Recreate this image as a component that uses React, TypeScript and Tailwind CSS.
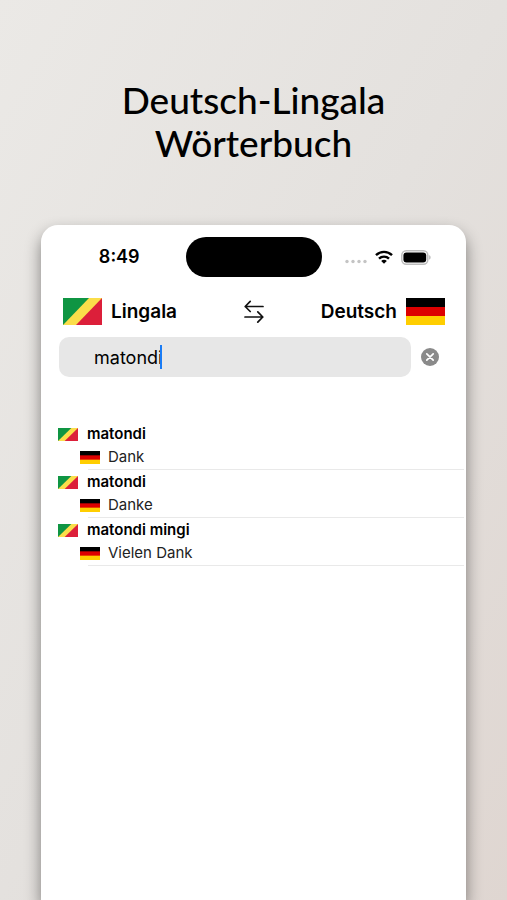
import React from "react";
import clsx from "clsx";

interface FlagProps {
  className?: string;
}

interface Entry {
  id: number;
  lingala: string;
  deutsch: string;
}

const entries: Entry[] = [
  { id: 1, lingala: "matondi", deutsch: "Dank" },
  { id: 2, lingala: "matondi", deutsch: "Danke" },
  { id: 3, lingala: "matondi mingi", deutsch: "Vielen Dank" },
];

const CongoFlag: React.FC<FlagProps> = ({ className }) => (
  <svg viewBox="0 0 39 26" preserveAspectRatio="none" aria-hidden="true" className={clsx("shrink-0", className)}>
    <rect width="39" height="26" fill="#fbde4a" />
    <path d="M0 0H26L0 26Z" fill="#0f9543" />
    <path d="M39 0V26H13Z" fill="#dc1f3a" />
  </svg>
);

const GermanFlag: React.FC<FlagProps> = ({ className }) => (
  <svg viewBox="0 0 39 27" preserveAspectRatio="none" aria-hidden="true" className={clsx("shrink-0", className)}>
    <rect width="39" height="27" fill="#000" />
    <rect y="9" width="39" height="18" fill="#dd0000" />
    <rect y="18" width="39" height="9" fill="#ffce00" />
  </svg>
);

const StatusBar = () => (
  <div className="grid grid-cols-[1fr_136px_1fr] items-center pt-3">
    <span className="pl-3 text-center text-lg leading-6 font-semibold">8:49</span>
    <div className="h-10 rounded-full bg-black" />
    <div className="flex items-center justify-end gap-2 pr-[35px]">
      <svg viewBox="0 0 22 16" className="h-4 w-[22px]" fill="#c4c4c4" aria-hidden="true">
        <circle cx="2" cy="12.5" r="1.7" />
        <circle cx="8" cy="12.5" r="1.7" />
        <circle cx="14" cy="12.5" r="1.7" />
        <circle cx="20" cy="12.5" r="1.7" />
      </svg>
      <svg viewBox="0 0 18 14" className="h-[14px] w-[18px]" fill="none" stroke="#000" strokeWidth="2.4" aria-hidden="true">
        <path d="M1 5.2a11.4 11.4 0 0 1 16 0" />
        <path d="M4 8.6a7.2 7.2 0 0 1 10 0" />
        <path d="M9 13.8 6.2 10.9a3.9 3.9 0 0 1 5.6 0Z" fill="#000" stroke="none" />
      </svg>
      <svg viewBox="0 0 30 15" className="h-[15px] w-[30px]" aria-hidden="true">
        <rect x="0.8" y="0.8" width="26" height="13.4" rx="4.4" fill="#fff" stroke="#bdbdbd" strokeWidth="1.5" />
        <rect x="2.4" y="2.4" width="22.8" height="10.2" rx="3" fill="#000" />
        <path d="M28.3 5.3c1.6.6 1.6 3.8 0 4.4Z" fill="#a8a8a8" />
      </svg>
    </div>
  </div>
);

const LanguageBar = () => (
  <div className="mt-[21px] grid grid-cols-[1fr_auto_1fr] items-center pr-[21px] pl-[22px]">
    <div className="flex items-center gap-[9px]">
      <CongoFlag className="h-[27px] w-[39px]" />
      <span className="text-[19px] leading-6 font-semibold">Lingala</span>
    </div>
    <button type="button" aria-label="Sprachen tauschen">
      <svg viewBox="0 0 20 24" className="h-6 w-5" fill="none" stroke="#111" strokeWidth="1.7" strokeLinecap="round" strokeLinejoin="round">
        <path d="M19 6.5H1.2M6.2 1.3 1.2 6.5l5 5" />
        <path d="M1 17h17.8M13.8 11.8l5 5.2-5 5.2" />
      </svg>
    </button>
    <div className="flex items-center justify-end gap-[9px]">
      <span className="text-[19px] leading-6 font-semibold">Deutsch</span>
      <GermanFlag className="h-[27px] w-[39px]" />
    </div>
  </div>
);

const SearchBar = () => (
  <div className="mt-3 flex items-center gap-[10px] pr-[27px] pl-[18px]">
    <div className="relative min-w-0 flex-1">
      <input
        type="text"
        aria-label="Suche"
        defaultValue="matondi"
        className="h-10 w-full rounded-[10px] bg-[#e7e7e7] pr-3 pl-[35px] text-lg outline-none"
      />
      <span className="absolute top-2 left-[101px] h-6 w-0.5 bg-[#1a7cf5]" />
    </div>
    <button type="button" aria-label="Eingabe löschen">
      <svg viewBox="0 0 18 18" className="size-[18px]">
        <circle cx="9" cy="9" r="9" fill="#8a8a8a" />
        <path d="m5.8 5.8 6.4 6.4m0-6.4-6.4 6.4" stroke="#fff" strokeWidth="1.7" strokeLinecap="round" />
      </svg>
    </button>
  </div>
);

const EntryRow: React.FC<{ entry: Entry }> = ({ entry }) => (
  <li>
    <div className="flex h-6 items-center gap-[9px]">
      <CongoFlag className="h-[13px] w-5" />
      <span className="text-[15px] font-semibold">{entry.lingala}</span>
    </div>
    <div className="flex h-[23px] items-center gap-2 pl-[22px]">
      <GermanFlag className="h-[13px] w-5" />
      <span className="text-[15px] text-[#222]">{entry.deutsch}</span>
    </div>
    <div className="ml-[30px] h-px bg-[#e9e9e9]" />
  </li>
);

const App = () => {
  return (
    <div className="flex min-h-screen flex-col bg-linear-to-br from-[#ebe9e6] via-[#e4e1de] to-[#dfd6d1] pt-[78px] text-black">
      <h1 className="text-center font-['Lato',sans-serif] text-[37px] leading-[43px] font-medium">
        Deutsch-Lingala
        <br />
        Wörterbuch
      </h1>
      <main className="mx-[41px] mt-[61px] flex-1 rounded-t-[17px] bg-white font-['Inter',sans-serif] shadow-[0_8px_16px_rgba(0,0,0,0.45)]">
        <StatusBar />
        <LanguageBar />
        <SearchBar />
        <ul className="mt-[45px] pr-[2px] pl-[17px]">
          {entries.map((entry) => (
            <EntryRow key={entry.id} entry={entry} />
          ))}
        </ul>
      </main>
    </div>
  );
};

export default App;
